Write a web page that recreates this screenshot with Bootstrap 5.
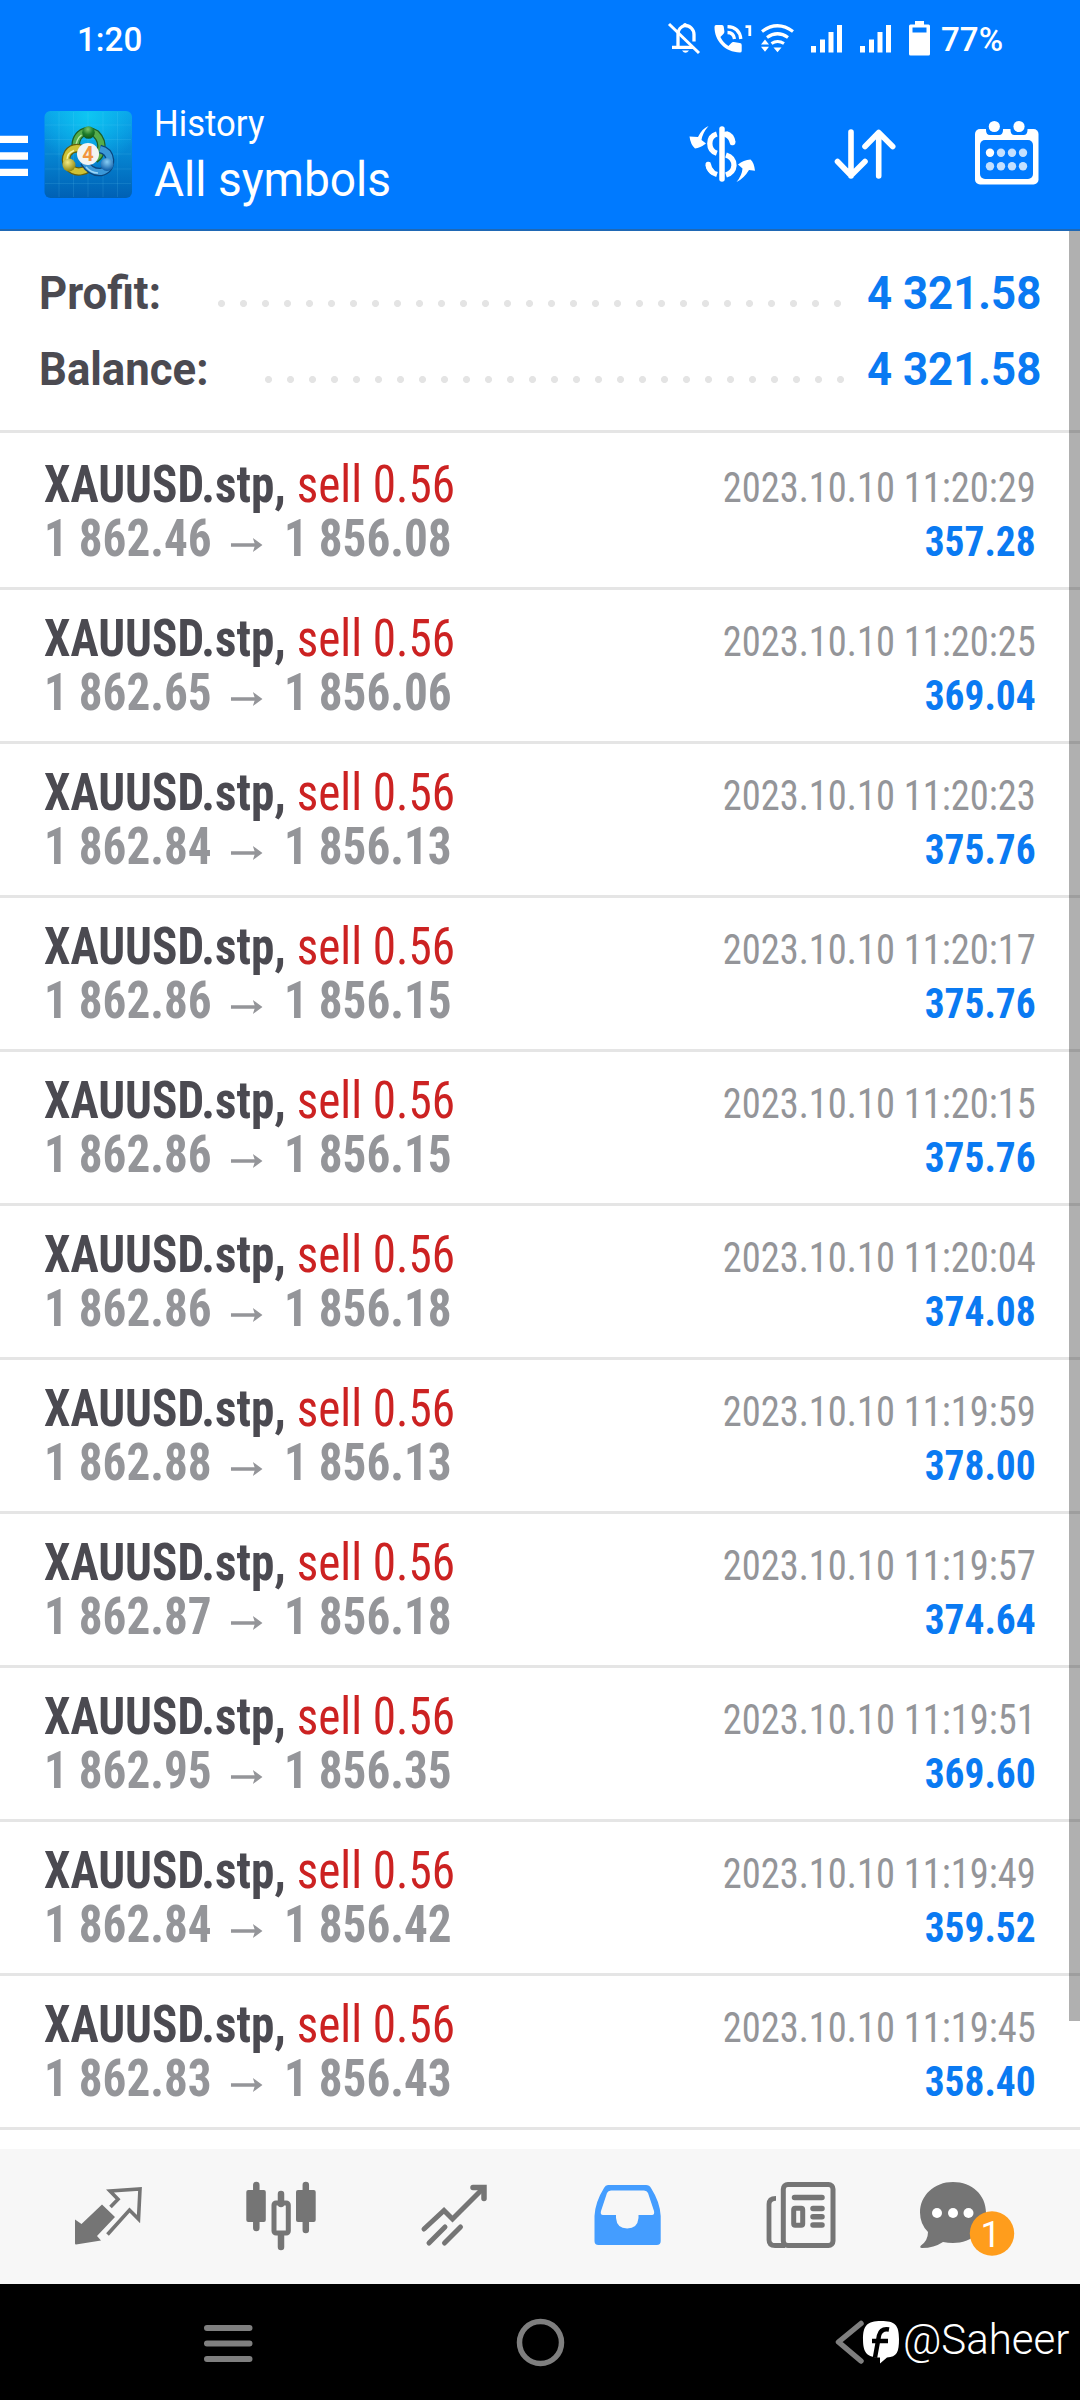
<!DOCTYPE html>
<html lang="en">
<head>
<meta charset="utf-8">
<meta name="viewport" content="width=device-width, initial-scale=1">
<title>History</title>
<link rel="stylesheet" href="https://cdn.jsdelivr.net/npm/bootstrap@5.3.0/dist/css/bootstrap.min.css">
<style>
body{font-family:Roboto,"Liberation Sans",sans-serif;background:#fff;width:1080px;height:2400px;overflow:hidden}
svg{display:block;flex:none}
.topbar{background:#007aff;height:231px;border-bottom:2px solid #1f68b5;color:#fff}
.status{height:78px;padding:0 75px 0 77px;font-size:34px;font-weight:500;line-height:78px}
.clock,.batt{transform-origin:0 50%;transform:scaleX(.975)}
.appbar{height:151px}
.titles{margin-left:20px;width:300px;padding-top:24px;white-space:nowrap}
.titles div{transform-origin:0 50%;transform:scaleX(.95)}
.t-small{font-size:36.5px;line-height:44px}
.t-big{font-size:48.5px;line-height:67px}
.main-area{height:1918px}
.summary{padding:25px 39px 22px 38.5px;border-bottom:3px solid #e5e5e5;margin-bottom:3px}
.sum-row{height:76px;line-height:76px;font-size:45.3px;font-weight:700}
.sum-row .lbl{color:#4b4a51;transform:scaleX(.965);transform-origin:0 50%}
.sum-row .amt{color:#0a7af2;transform:scaleX(.967);transform-origin:100% 50%}
.dots{height:7px;margin-top:18px;background:radial-gradient(circle at 3.5px 3.5px,#e4e4e4 3.1px,transparent 3.9px) 0 0/22px 7px repeat-x}
.d-profit{width:623px;margin-right:20px}
.d-balance{width:579px;margin-right:17px}
.deal{height:154px;border-bottom:3px solid #e5e5e5;padding:22px 44px 0 44px;white-space:nowrap;line-height:54px;font-stretch:condensed}
.deal .left{font-size:51.5px;transform:scaleX(.916);transform-origin:0 50%}
.deal .sym{font-weight:700;color:#4b4a51}
.deal .side{color:#cc2222}
.deal .px{color:#949599;font-weight:700}
.deal .right{font-size:42px;text-align:right;padding-top:3px}
.deal .right div{transform-origin:100% 50%}
.deal .when{color:#949599;transform:scaleX(.916)}
.deal .gain{color:#0a7af2;font-weight:700;transform:scaleX(.938)}
.arr{margin:11px 23px 0 21px}
.scroller{right:0;top:231px;width:11px;height:1790px;background:rgba(0,0,0,.31)}
.tabs{height:135px;background:#f7f7f7;padding:0 21px}
.sysnav{height:116px;background:#000}
.handle{left:903px;top:2315px;color:#fff;font-size:42px;line-height:50px;font-weight:350;white-space:nowrap}
</style>
<script src="https://cdn.jsdelivr.net/npm/bootstrap@5.3.0/dist/js/bootstrap.bundle.min.js"></script>
</head>
<body class="position-relative">
<header class="topbar">
  <div class="status d-flex align-items-center justify-content-between">
    <span class="clock">1:20</span>
    <div class="d-flex align-items-center">
      <svg width="277" height="78" viewBox="664 0 277 78" fill="none" stroke="#fff">
        <!-- muted bell -->
        <path d="M678 46V34c0-4 3-7.500 7-8.500 5 0 9 4 9 9v7M672 47.300h21" stroke-width="3.300"/>
        <path d="M682.500 25q2.500-4 5 0M682 50.500h7q-3.500 4.500-7 0z" stroke="none" fill="#fff"/>
        <path d="M669 24l30 29" stroke-width="3"/>
        <!-- call with waves -->
        <path d="M716 25h6q1.500 0 1.700 1.500l.7 5q.1 1.500-1 2.400l-3 3q3 6 8 9l3-3q1-1 2.300-.8l6 1q2 .3 2 1.800V51q0 1.500-1.800 1.500C725 52 714.500 41 714.500 27q0-2 1.500-2z" fill="#fff" stroke="none"/>
        <path d="M727.500 32.500q6 0 7 6.500M727.500 26.700q12 .5 13.300 12.300" stroke-width="3.300"/>
        <path d="M745.500 26.700h4.300V36" stroke-width="2.800"/>
        <!-- wifi -->
        <path d="M762 31.500q15.500-11.500 31 0M767 37.500q10.500-7.500 21 0M771.500 43.500q6-4 12.500 0" stroke-width="3.200"/>
        <path d="M773.500 47.500h8l-4 4.800zM761 44.500l4-5 4 5zM761 46.800h8l-4 5z" fill="#fff" stroke="none"/>
        <!-- signal bars and battery -->
        <path d="M811 46h5v6.500h-5zM820 39.500h5v13h-5zM828.500 32h5v20.500h-5zM837 25h5v27.500h-5zM860 46h5v6.500h-5zM869 39.500h5v13h-5zM877.500 32h5v20.500h-5zM886 25h5v27.500h-5z" fill="#fff" stroke="none"/>
        <path fill-rule="evenodd" d="M915 21h9v3.500h4.500q1.500 0 1.500 1.500v28q0 1.500-1.500 1.500h-18q-1.500 0-1.500-1.500V26q0-1.500 1.500-1.500h4.500zM912.500 27.500v5h14v-5z" fill="#fff" stroke="none"/>
      </svg>
      <span class="batt">77%</span>
    </div>
  </div>
  <div class="appbar d-flex">
    <svg width="134" height="151" viewBox="0 78 134 151">
      <defs>
        <linearGradient id="tile" x1="0" y1="0" x2="0" y2="1"><stop offset="0" stop-color="#0a9fe8"/><stop offset=".5" stop-color="#0585d2"/><stop offset="1" stop-color="#0060b4"/></linearGradient>
        <radialGradient id="glow" cx=".5" cy=".05" r=".6"><stop offset="0" stop-color="#0ec6f2"/><stop offset="1" stop-color="#0ec6f2" stop-opacity="0"/></radialGradient>
        <radialGradient id="gg" cx=".45" cy=".25" r=".7"><stop offset="0" stop-color="#7cc66e"/><stop offset=".6" stop-color="#1f7d2b"/><stop offset="1" stop-color="#125c1c"/></radialGradient>
        <radialGradient id="gy" cx=".4" cy=".3" r=".7"><stop offset="0" stop-color="#f3ea83"/><stop offset="1" stop-color="#8f8710"/></radialGradient>
        <radialGradient id="gb" cx=".5" cy=".3" r=".7"><stop offset="0" stop-color="#86cdf5"/><stop offset="1" stop-color="#0b5aa5"/></radialGradient>
      </defs>
      <path d="M0 135.700h28v7.300H0zM0 152.300h28v7.400H0zM0 168.700h28v7.300H0z" fill="#fff"/>
      <rect x="44.500" y="111" width="87.500" height="87" rx="6" fill="url(#tile)"/>
      <rect x="44.500" y="111" width="87.500" height="87" rx="6" fill="url(#glow)"/>
      <path d="M59 112v85M73.500 112v85M88 112v85M103 112v85M117.500 112v85M45 125h86M45 139.500h86M45 154h86M45 169h86M45 183.500h86" stroke="#7ce0ff" stroke-opacity=".13" fill="none"/>
      <g fill="none">
        <path d="M76 152q-2-14 6-19 7-4 14 1 7 7 5 16-1 6-6 9" stroke="#1d5f25" stroke-width="8.500"/>
        <path d="M76 152q-2-14 6-19 7-4 14 1 7 7 5 16-1 6-6 9" stroke="#55ad4c" stroke-width="6"/>
        <path d="M75.500 149q.5-10 6-14" stroke="#b9e8a8" stroke-width="1.500"/>
        <path d="M82 149q-9-3-14 4-4 7 0 13 6 7 14 5 6-1 9-6" stroke="#655f0c" stroke-width="8.500"/>
        <path d="M82 149q-9-3-14 4-4 7 0 13 6 7 14 5 6-1 9-6" stroke="#cfc235" stroke-width="6"/>
        <path d="M67 160q0-7 7-9.500" stroke="#f7f2a5" stroke-width="1.500"/>
        <path d="M100 149q9 2 10 11 0 10-9 12-10 1-17-10" stroke="#0a467f" stroke-width="8.500"/>
        <path d="M100 149q9 2 10 11 0 10-9 12-10 1-17-10" stroke="#3b98d8" stroke-width="6"/>
        <path d="M86 167q5 6 12 6" stroke="#9bd6f7" stroke-width="1.500"/>
      </g>
      <circle cx="88.500" cy="132.500" r="6.300" fill="url(#gg)"/><circle cx="69" cy="165" r="6.500" fill="url(#gy)"/><circle cx="107" cy="164.500" r="6.500" fill="url(#gb)"/>
      <circle cx="88" cy="154" r="11" fill="#f3f4f3"/>
      <text x="88" y="161" text-anchor="middle" font-family="Roboto" font-size="20" font-weight="700" fill="#f2953f">4</text>
    </svg>
    <div class="titles"><div class="t-small">History</div><div class="t-big">All symbols</div></div>
    <svg class="ms-auto" width="420" height="151" viewBox="660 78 420 151" fill="none" stroke="#fff" stroke-linecap="round" stroke-linejoin="round">
      <!-- currency with rotating arrows -->
      <path d="M722 129v50" stroke-width="5.500"/>
      <path d="M716.800 134q-7 2-7 9.500t7 9.800M726 133.500q6 1.500 7 9M708 165q1 7 9 9.500M726 155q8 2.500 8 10.500-.5 7-8 9.500" stroke-width="5.300" stroke-linecap="butt"/>
      <path d="M726 134.500q5 2 6.500 8M708.300 164.500q.5 4 3.500 7" stroke-width="5.600"/>
      <path d="M708.500 126q-6.500 2.500-10.500 11l-8.500-.5q1 8 5.500 12 5-.5 11-5l-4.500-3.500q1-7 7-14z" fill="#fff" stroke="none"/>
      <path d="M736.500 182q7.500-3.500 12.500-12l6 .8q-1-8.500-4.500-11.300-7 .5-12.500 5l4.500 4q-.5 7-6 13.500z" fill="#fff" stroke="none"/>
      <!-- sort arrows -->
      <path d="M851 132v44M837.500 161.500l13.500 14 14-14M878.700 176v-43M865 146.500l13.700-14 14 14" stroke-width="5.600"/>
      <!-- calendar -->
      <rect x="975" y="129" width="63.500" height="55.500" rx="5" fill="#fff" stroke="none"/>
      <rect x="980" y="140" width="53" height="39" rx="5" fill="#007aff" stroke="none"/>
      <path d="M986 126h17v4q0 5-4 5h-9q-4 0-4-5zM1010.500 126h17v4q0 5-4 5h-9q-4 0-4-5z" fill="#007aff" stroke="none"/>
      <g stroke="none" fill="#c4e0ff"><circle cx="994.300" cy="126.500" r="5.600" fill="#fff"/><circle cx="1019" cy="126.500" r="5.600" fill="#fff"/>
      <circle cx="990" cy="152.700" r="4.200" fill="#fff"/><circle cx="1001" cy="152.700" r="4.200"/><circle cx="1012" cy="152.700" r="4.200"/><circle cx="1023" cy="152.700" r="4.200"/>
      <circle cx="990" cy="166.300" r="4.200"/><circle cx="1001" cy="166.300" r="4.200"/><circle cx="1012" cy="166.300" r="4.200"/><circle cx="1023" cy="166.300" r="4.200"/></g>
    </svg>
  </div>
</header>

<main class="main-area overflow-hidden">
  <section class="summary">
    <div class="sum-row d-flex align-items-center"><span class="lbl">Profit:</span><span class="dots d-profit ms-auto"></span><span class="amt">4 321.58</span></div>
    <div class="sum-row d-flex align-items-center"><span class="lbl">Balance:</span><span class="dots d-balance ms-auto"></span><span class="amt">4 321.58</span></div>
  </section>
  <section id="deals"></section>
</main>

<nav class="tabs d-flex">
  <svg width="173" height="135" viewBox="21 2149 173 135" fill="none" stroke="#757575">
    <path d="M102 2204.500l13 12.500-18 19 4 4.500-25 4q-1 0-1-1v-24l6.500 4.500z" fill="#757575" stroke="none"/>
    <path d="M110.500 2207l7.500-7.700-8-8.300 30-2-1.500 30-9-9-22 24.500" stroke-width="3.600"/>
  </svg>
  <svg width="173" height="135" viewBox="194 2149 173 135" fill="none" stroke="#757575">
    <path d="M256.300 2185v43M305.800 2185v45M281 2194v10M281 2235v12" stroke-width="6.500" stroke-linecap="round"/>
    <rect x="246.300" y="2190" width="19.500" height="32" rx="2" fill="#757575" stroke="none"/><rect x="296" y="2190" width="19.700" height="32" rx="2" fill="#757575" stroke="none"/>
    <rect x="274" y="2203" width="14.300" height="30" rx="2" stroke-width="5"/>
  </svg>
  <svg width="173" height="135" viewBox="367 2149 173 135" fill="none" stroke="#757575" stroke-width="5" stroke-linecap="round">
    <path d="M424 2229l20-18.500 8.500 8.500 31-31"/><path d="M473 2187.500h11v11" stroke-width="5.500"/>
    <path d="M429 2243l16-16M444.500 2243l16-16"/>
  </svg>
  <svg width="173" height="135" viewBox="540 2149 173 135">
    <path fill="#449dff" d="M608 2185h38q3.500 0 5 3 9 14 9.700 28v25q0 4-4 4H598.500q-4 0-4-4v-25q.7-14 9.500-28 1.500-3 4-3z"/>
    <path fill="#f7f7f7" d="M608 2190.500h36q3 0 4 2.500l6 18q.8 4-2 4h-13.500v3q-1 10.500-11.300 10.500T616 2218v-3h-13q-3 0-2-4l6-18q1-2.500 4-2.500z"/>
  </svg>
  <svg width="173" height="135" viewBox="713 2149 173 135" fill="none" stroke="#757575" stroke-linecap="round">
    <rect x="783.300" y="2184.500" width="49.700" height="61" rx="4.500" stroke-width="5"/>
    <path d="M776 2198.300q-7 0-7 6V2240q0 5.500 6 5.500h10" stroke-width="4.800" stroke-linecap="butt"/>
    <path d="M794.500 2197.500h27.500M813 2208.500h9M813 2216.700h9M813 2225h9" stroke-width="5.500"/>
    <rect x="793.700" y="2208.300" width="9" height="17" rx="1.500" stroke-width="5"/>
  </svg>
  <svg width="173" height="135" viewBox="886 2149 173 135">
    <path fill="#757575" d="M953 2182c19 0 33 13 33 30.500s-14 30.500-33 30.500q-5 0-10-1-9 6-21 6-3-.5-1-2.500 7-5 7-13.500-8-8-8-19.500c0-17 14-30.500 33-30.500z"/>
    <g fill="#fff"><circle cx="937" cy="2213" r="5"/><circle cx="953" cy="2213" r="5"/><circle cx="968.500" cy="2213" r="5"/></g>
    <circle cx="992" cy="2233.500" r="22.200" fill="#ff9d1c"/>
    <text x="990.500" y="2247" text-anchor="middle" font-size="36" fill="#fff">1</text>
  </svg>
</nav>

<footer class="sysnav">
  <svg width="1080" height="116" viewBox="0 2284 1080 116" fill="none" stroke="#7f7f7f" stroke-linecap="round" stroke-linejoin="round">
    <path d="M207 2328h42.500M207 2343.500h42.500M207 2359h42.500" stroke-width="6"/>
    <circle cx="540.500" cy="2342.500" r="21" stroke-width="5.500"/>
    <path d="M861 2323.500L838.500 2342 861 2361" stroke-width="5.500"/>
    <path fill="#fff" stroke="none" d="M881 2321c14 0 18 4 18 18 0 13-2 18-12 18.500l-7 6v-6c-13 0-17-5-17-18 0-14 4-18.500 18-18.500z"/>
    <path d="M889 2329.500q-8-1.500-10 6l-4 22M872 2341h16" stroke="#000" stroke-width="4.400" stroke-linecap="butt"/>
  </svg>
</footer>
<div class="handle position-absolute">@Saheer</div>
<div class="scroller position-absolute"></div>

<script>
const deals = [
  ["1 862.46","1 856.08","11:20:29","357.28"],
  ["1 862.65","1 856.06","11:20:25","369.04"],
  ["1 862.84","1 856.13","11:20:23","375.76"],
  ["1 862.86","1 856.15","11:20:17","375.76"],
  ["1 862.86","1 856.15","11:20:15","375.76"],
  ["1 862.86","1 856.18","11:20:04","374.08"],
  ["1 862.88","1 856.13","11:19:59","378.00"],
  ["1 862.87","1 856.18","11:19:57","374.64"],
  ["1 862.95","1 856.35","11:19:51","369.60"],
  ["1 862.84","1 856.42","11:19:49","359.52"],
  ["1 862.83","1 856.43","11:19:45","358.40"]
];
document.getElementById("deals").innerHTML = deals.map(([open, close, time, gain]) => `
  <div class="deal d-flex justify-content-between">
    <div class="left">
      <div><span class="sym">XAUUSD.stp,</span> <span class="side">sell 0.56</span></div>
      <div class="px d-flex align-items-center"><span>${open}</span><svg class="arr" width="35" height="16" viewBox="0 0 35 16" fill="none" stroke="#949599"><path d="M0 8h31" stroke-width="3.500"/><path d="M24 1l10.500 7L24 15l2.500-7z" fill="#949599" stroke="none"/></svg><span>${close}</span></div>
    </div>
    <div class="right"><div class="when">2023.10.10 ${time}</div><div class="gain">${gain}</div></div>
  </div>`).join("");
</script>
</body>
</html>
